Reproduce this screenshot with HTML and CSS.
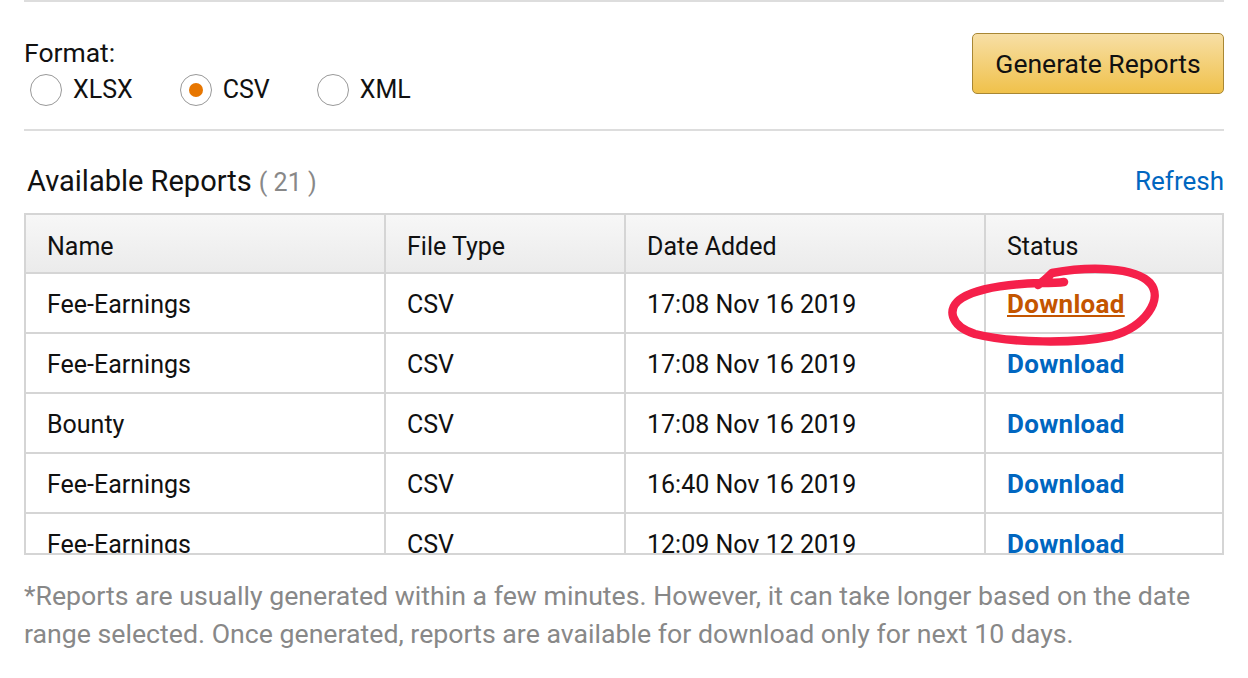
FILE: index.html
```html
<!DOCTYPE html>
<html>
<head>
<meta charset="utf-8">
<link rel="stylesheet" href="styles.css">
</head>
<body>
<div class="page">
  <div class="top-rule"></div>
  <div class="format-row">
    <div class="format">
      <div class="format-label">Format:</div>
      <div class="radios">
        <label class="radio"><span class="circle"></span><span>XLSX</span></label>
        <label class="radio"><span class="circle checked"></span><span>CSV</span></label>
        <label class="radio"><span class="circle"></span><span>XML</span></label>
      </div>
    </div>
    <button class="gen-btn">Generate Reports</button>
  </div>
  <div class="rule"></div>
  <div class="avail-row">
    <div class="avail-title">Available Reports <span class="count">( 21 )</span></div>
    <a class="refresh">Refresh</a>
  </div>
  <div class="table-wrap">
    <table class="reports">
      <thead>
        <tr><th class="c1">Name</th><th class="c2">File Type</th><th class="c3">Date Added</th><th class="c4">Status</th></tr>
      </thead>
      <tbody>
        <tr><td>Fee-Earnings</td><td>CSV</td><td>17:08 Nov 16 2019</td><td><a class="dl visited">Download</a></td></tr>
        <tr><td>Fee-Earnings</td><td>CSV</td><td>17:08 Nov 16 2019</td><td><a class="dl">Download</a></td></tr>
        <tr><td>Bounty</td><td>CSV</td><td>17:08 Nov 16 2019</td><td><a class="dl">Download</a></td></tr>
        <tr><td>Fee-Earnings</td><td>CSV</td><td>16:40 Nov 16 2019</td><td><a class="dl">Download</a></td></tr>
        <tr><td>Fee-Earnings</td><td>CSV</td><td>12:09 Nov 12 2019</td><td><a class="dl">Download</a></td></tr>
      </tbody>
    </table>
    <svg class="scribble" width="230" height="90" viewBox="940 258 230 90">
      <path d="M1038 282 C1044 278 1048 274 1052 270 C1090 263 1135 264 1150 280 C1164 296 1145 324 1112 333 C1075 341 1010 340 975 331 C950 323 946 305 962 295 C980 284 1010 281 1040 280 C1050 280 1058 280 1064 279" fill="none" stroke="#f5204a" stroke-width="8.5" stroke-linecap="round" stroke-linejoin="round"/>
    </svg>
  </div>
  <p class="note">*Reports are usually generated within a few minutes. However, it can take longer based on the date range selected. Once generated, reports are available for download only for next 10 days.</p>
</div>
</body>
</html>
```

FILE: styles.css
```css
html, body {
  margin: 0;
  padding: 0;
  background: #fff;
}
body {
  font-family: Roboto, "Noto Sans", sans-serif;
  color: #111;
  font-size: 25px;
}
.page {
  padding: 0 24px;
  position: relative;
}
.top-rule {
  height: 2px;
  background: #ddd;
}
.format-row {
  display: flex;
  justify-content: space-between;
  align-items: flex-start;
  padding-top: 31px;
  height: 96px;
}
.format-label {
  font-size: 26.5px;
  line-height: 30px;
  margin-top: 5px;
}
.radios {
  display: flex;
  gap: 47px;
  margin-top: 5px;
}
.radio {
  display: flex;
  align-items: center;
  gap: 11px;
  line-height: 34px;
}
.circle {
  display: inline-flex;
  align-items: center;
  justify-content: center;
  width: 30px;
  height: 30px;
  border: 1.5px solid #999;
  border-radius: 50%;
  margin-left: 6px;
}
.radio + .radio .circle {
  margin-left: 0;
}
.circle.checked::after {
  content: "";
  width: 14px;
  height: 14px;
  border-radius: 50%;
  background: #e77600;
}
.gen-btn {
  font-family: inherit;
  font-size: 26.5px;
  color: #111;
  width: 252px;
  height: 61px;
  border: 1.5px solid #a88734;
  border-radius: 5px;
  background: linear-gradient(#f7dfa5, #f0c14b);
  padding: 0;
  margin-top: 0;
}
.rule {
  height: 2px;
  background: #ddd;
}
.avail-row {
  display: flex;
  justify-content: space-between;
  align-items: center;
  height: 64px;
  padding-top: 18px;
}
.avail-title {
  font-size: 29px;
  padding-left: 3px;
}
.count {
  font-size: 25px;
  color: #888;
}
.refresh {
  color: #0066c0;
  font-size: 26px;
}
.table-wrap {
  position: relative;
  box-sizing: border-box;
  height: 342px;
  overflow: hidden;
  border: 2px solid #d5d5d5;
  border-right: none;
}
.reports {
  border-collapse: separate;
  border-spacing: 0;
  table-layout: fixed;
  width: 1198px;
}
.reports th,
.reports td {
  box-sizing: border-box;
  border-right: 2px solid #d5d5d5;
  border-bottom: 2px solid #d5d5d5;
  text-align: left;
  padding: 0 0 0 21px;
  font-weight: normal;
  white-space: nowrap;
}
.c1 { width: 360px; }
.c2 { width: 240px; }
.c3 { width: 360px; }
.c4 { width: 238px; }
.reports th {
  height: 59px;
  padding-top: 5px;
  background: linear-gradient(#f7f7f7, #ebebeb);
}
.reports td {
  height: 60px;
  padding-top: 2px;
}
.dl {
  color: #0066c0;
  font-weight: bold;
  font-size: 26px;
  letter-spacing: 0.3px;
}
.dl.visited {
  color: #c45500;
  text-decoration: underline;
}
.scribble {
  position: absolute;
  left: 914px;
  top: 46px;
  overflow: visible;
}
.note {
  margin: 22px 0 0;
  color: #888;
  font-size: 26.7px;
  line-height: 38px;
}
```
